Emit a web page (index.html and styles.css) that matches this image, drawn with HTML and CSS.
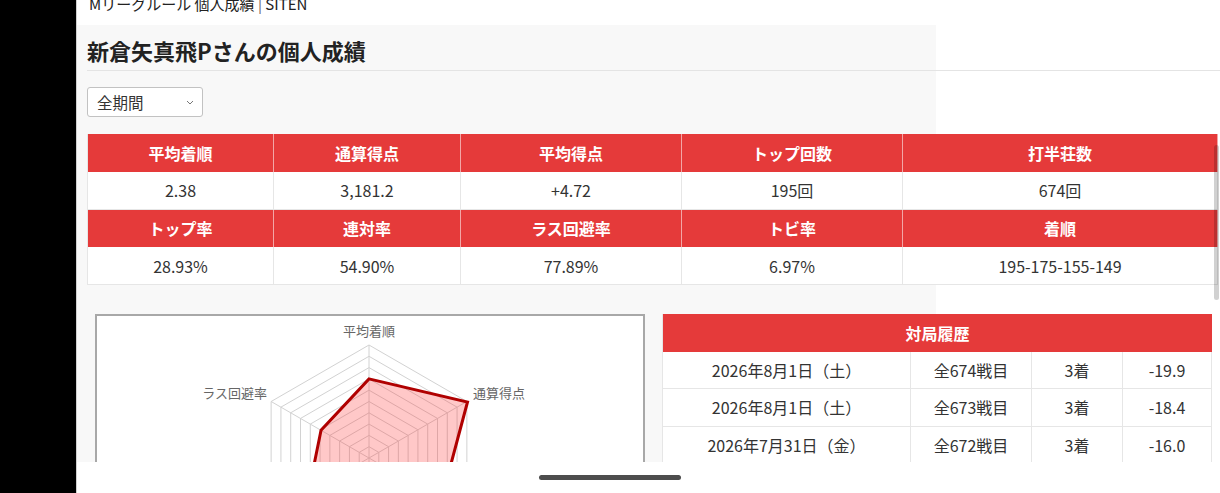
FILE: index.html
```html
<!DOCTYPE html>
<html lang="ja">
<head>
<meta charset="utf-8">
<title>個人成績</title>
<link rel="stylesheet" href="styles.css">
</head>
<body>
<div class="device">
  <aside class="side"></aside>
  <div class="screen">
    <header class="site-title"><span class="t">Mリーグルール 個人成績 <span class="sep">|</span> SITEN</span></header>
    <main class="panel">
      <h1 class="title">新倉矢真飛Pさんの個人成績</h1>
      <div class="select">
        <span>全期間</span>
        <svg class="chev" width="8" height="5" viewBox="0 0 8 5"><path d="M1 1 L4 4 L7 1" fill="none" stroke="#777" stroke-width="1"/></svg>
      </div>
      <table class="stats">
        <colgroup><col class="c1"><col class="c2"><col class="c3"><col class="c4"><col class="c5"></colgroup>
        <tr class="hrow"><th>平均着順</th><th>通算得点</th><th>平均得点</th><th>トップ回数</th><th>打半荘数</th></tr>
        <tr class="drow"><td>2.38</td><td>3,181.2</td><td>+4.72</td><td>195回</td><td>674回</td></tr>
        <tr class="hrow"><th>トップ率</th><th>連対率</th><th>ラス回避率</th><th>トビ率</th><th>着順</th></tr>
        <tr class="drow"><td>28.93%</td><td>54.90%</td><td>77.89%</td><td>6.97%</td><td>195-175-155-149</td></tr>
      </table>
      <div class="lower">
        <div class="chart">
          <svg width="546" height="300" viewBox="97 316 546 300">
            <g fill="none" stroke="#d2d2d2" stroke-width="1">
              <polygon points="369,446.7 378.79,452.35 378.79,463.65 369,469.3 359.21,463.65 359.21,452.35"/>
              <polygon points="369,435.4 388.57,446.7 388.57,469.3 369,480.6 349.43,469.3 349.43,446.7"/>
              <polygon points="369,424.1 398.36,441.05 398.36,474.95 369,491.9 339.64,474.95 339.64,441.05"/>
              <polygon points="369,412.8 408.14,435.4 408.14,480.6 369,503.2 329.86,480.6 329.86,435.4"/>
              <polygon points="369,401.5 417.93,429.75 417.93,486.25 369,514.5 320.07,486.25 320.07,429.75"/>
              <polygon points="369,390.2 427.71,424.1 427.71,491.9 369,525.8 310.29,491.9 310.29,424.1"/>
              <polygon points="369,378.9 437.5,418.45 437.5,497.55 369,537.1 300.5,497.55 300.5,418.45"/>
              <polygon points="369,367.6 447.29,412.8 447.29,503.2 369,548.4 290.71,503.2 290.71,412.8"/>
              <polygon points="369,356.3 457.07,407.15 457.07,508.85 369,559.7 280.93,508.85 280.93,407.15"/>
              <polygon points="369,345 466.86,401.5 466.86,514.5 369,571 271.14,514.5 271.14,401.5"/>
              <path d="M369 458 L369 345 M369 458 L466.86 401.5 M369 458 L466.86 514.5 M369 458 L369 571 M369 458 L271.14 514.5 M369 458 L271.14 401.5"/>
            </g>
            <polygon points="369,378.9 467.5,402 441.4,499.8 369,508.9 308.3,493 321.05,430.3" fill="rgba(255,50,50,0.27)" stroke="#b00000" stroke-width="3" stroke-linejoin="miter"/>
            <g class="lbl" font-size="13" fill="#666">
              <text x="369" y="336" text-anchor="middle">平均着順</text>
              <text x="473" y="398">通算得点</text>
              <text x="267" y="398" text-anchor="end">ラス回避率</text>
            </g>
          </svg>
        </div>
        <table class="history">
          <colgroup><col class="h1"><col class="h2"><col class="h3"><col class="h4"></colgroup>
          <tr class="hhead"><th colspan="4">対局履歴</th></tr>
          <tr><td>2026年8月1日（土）</td><td>全674戦目</td><td>3着</td><td>-19.9</td></tr>
          <tr><td>2026年8月1日（土）</td><td>全673戦目</td><td>3着</td><td>-18.4</td></tr>
          <tr><td>2026年7月31日（金）</td><td>全672戦目</td><td>3着</td><td>-16.0</td></tr>
          <tr><td>2026年7月31日（金）</td><td>全671戦目</td><td>2着</td><td>+12.3</td></tr>
        </table>
      </div>
    </main>
    <div class="scroll-ind"></div>
    <div class="home-area"><div class="home-bar"></div></div>
  </div>
</div>
</body>
</html>
```

FILE: styles.css
```css
* { box-sizing: border-box; }
html, body { margin: 0; padding: 0; }
body {
  width: 1220px;
  height: 493px;
  overflow: hidden;
  background: #fff;
  font-family: "Noto Sans CJK JP", "Noto Sans", sans-serif;
  color: #333;
}
.device { display: flex; width: 1220px; height: 493px; }
.side { width: 76px; flex: none; background: #000; }
.screen {
  position: relative;
  flex: 1;
  border-left: 1px solid #cfcfcf;
  overflow: hidden;
  background: #fff;
}
.site-title { height: 25px; padding-left: 12px; overflow: hidden; }
.site-title .t {
  display: block;
  margin-top: -6px;
  font-size: 15px;
  line-height: 20px;
  color: #222;
  white-space: nowrap;
}
.site-title .sep { color: #666; }

.panel {
  display: block;
  width: 859px;
  height: 600px;
  background: #f8f8f8;
  padding-left: 10px;
}
.title {
  margin: 0;
  width: 1133px;
  padding: 10px 0 5px;
  font-size: 22px;
  line-height: 30px;
  font-weight: 700;
  color: #222;
  border-bottom: 1px solid #e4e4e4;
}
.select {
  margin-top: 16px;
  width: 116px;
  height: 30px;
  background: #fff;
  border: 1px solid #c2c2c2;
  border-radius: 3px;
  display: flex;
  align-items: center;
  justify-content: space-between;
  padding: 0 8px 0 9px;
  font-size: 15.5px;
  color: #333;
}
.chev { margin-top: 1px; }

.stats {
  margin-top: 17px;
  width: 1130px;
  table-layout: fixed;
  border-collapse: separate;
  border-spacing: 0;
  border-left: 1px solid #e6e6e6;
  font-size: 16px;
}
.stats .c1 { width: 186px; }
.stats .c2 { width: 187px; }
.stats .c3 { width: 221px; }
.stats .c4 { width: 221px; }
.stats .c5 { width: 315px; }
.stats th, .stats td, .history th, .history td {
  padding: 0;
  text-align: center;
  vertical-align: middle;
  white-space: nowrap;
}
.stats th {
  background: #e53a3a;
  color: #fff;
  font-weight: 700;
  border-right: 1px solid rgba(255,255,255,0.55);
}
.stats td {
  background: #fff;
  color: #333;
  border-right: 1px solid #e6e6e6;
  border-bottom: 1px solid #e6e6e6;
}
.stats .hrow { height: 37.75px; }
.stats .drow { height: 37.75px; }

.lower {
  margin-top: 29px;
  width: 1124px;
  display: flex;
  align-items: flex-start;
}
.chart {
  flex: none;
  margin-left: 8px;
  width: 550px;
  height: 320px;
  background: #fff;
  border: 2px solid #a8a8a8;
}
.chart svg { display: block; }
.lbl { font-family: "Noto Sans CJK JP", "Noto Sans", sans-serif; }

.history {
  flex: none;
  margin-left: 17px;
  width: 549px;
  table-layout: fixed;
  border-collapse: separate;
  border-spacing: 0;
  border-left: 1px solid #e6e6e6;
  font-size: 16px;
}
.history .h1 { width: 248px; }
.history .h2 { width: 121px; }
.history .h3 { width: 91px; }
.history .h4 { width: 89px; }
.history th {
  height: 37.5px;
  background: #e53a3a;
  color: #fff;
  font-weight: 700;
}
.history td {
  height: 37.5px;
  background: #fff;
  color: #333;
  border-right: 1px solid #e6e6e6;
  border-bottom: 1px solid #e6e6e6;
}

.scroll-ind {
  position: absolute;
  left: 1137px;
  top: 145px;
  width: 5px;
  height: 155px;
  border-radius: 3px;
  background: rgba(0,0,0,0.18);
}
.home-area {
  position: absolute;
  left: 0;
  right: 0;
  top: 462px;
  bottom: 0;
  background: #fff;
}
.home-bar {
  margin: 13px 0 0 462px;
  width: 142px;
  height: 5px;
  border-radius: 3px;
  background: #4d4d4d;
}
```
